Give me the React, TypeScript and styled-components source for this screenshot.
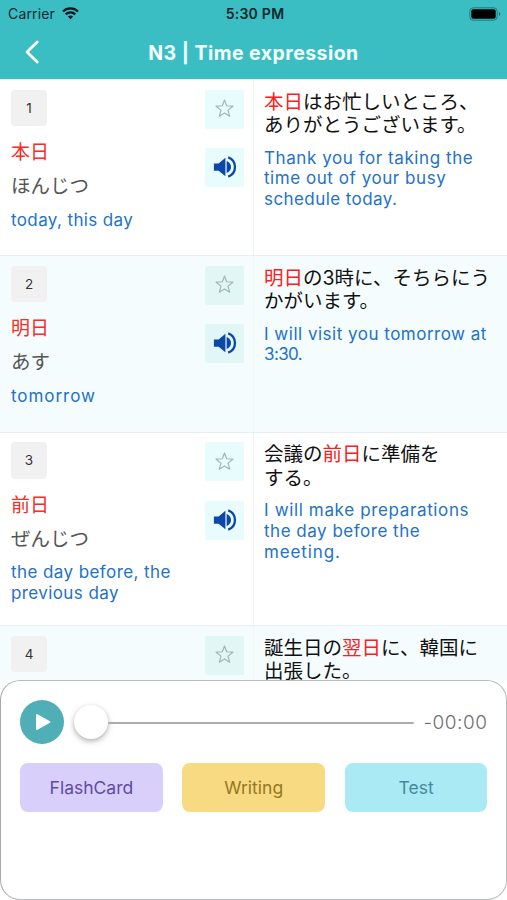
import React from "react";
import styled, { createGlobalStyle } from "styled-components";

const GlobalStyle = createGlobalStyle`
  * { box-sizing: border-box; }
  body {
    margin: 0;
    background: #fff;
    font-family: Inter, "Noto Sans CJK JP", sans-serif;
  }
`;

const Screen = styled.main`
  display: flex;
  flex-direction: column;
  width: 507px;
  height: 900px;
  overflow: hidden;
  background: #fff;
`;

const Header = styled.header`
  flex: none;
  height: 79px;
  background: #3abec4;
`;

const StatusBar = styled.div`
  display: grid;
  grid-template-columns: 1fr auto 1fr;
  align-items: center;
  height: 27px;
  padding: 0 5px 0 8px;
  color: #08282c;
  font-size: 14px;
  line-height: 27px;
`;

const Carrier = styled.span`
  display: flex;
  align-items: center;
  gap: 7px;
  letter-spacing: 0.15px;
`;

const Clock = styled.span`
  font-weight: 600;
  letter-spacing: 0.25px;
`;

const BatteryIcon = styled.svg`
  justify-self: end;
`;

const NavBar = styled.div`
  display: grid;
  grid-template-columns: 64px 1fr 64px;
  align-items: center;
  height: 51px;
`;

const BackButton = styled.button`
  display: flex;
  padding: 0 0 2px 24px;
  border: 0;
  background: none;
`;

const Title = styled.h1`
  margin: 0;
  color: #f4ffff;
  font-size: 19.5px;
  font-weight: 700;
  line-height: 24px;
  letter-spacing: 0.45px;
  text-align: center;
  white-space: nowrap;
`;

const List = styled.section`
  flex: none;
  height: 601px;
  overflow: hidden;
`;

const Row = styled.article<{ $tinted: boolean; $height: number }>`
  display: grid;
  grid-template-columns: 253px 254px;
  height: ${(p) => p.$height}px;
  border-top: 1px solid #e9eeee;
  background: ${(p) => (p.$tinted ? "#f4fcfd" : "#fff")};
`;

const WordCell = styled.div`
  display: flex;
  justify-content: space-between;
  padding: 9.5px 9px 0 11px;
`;

const WordColumn = styled.div`
  display: flex;
  flex-direction: column;
  align-items: flex-start;
`;

const NumberBadge = styled.span`
  display: flex;
  align-items: center;
  justify-content: center;
  width: 36px;
  height: 36.5px;
  margin-bottom: 12px;
  border-radius: 4px;
  background: #f1f1f1;
  color: #333;
  font-size: 13.5px;
`;

const Kanji = styled.div`
  height: 26px;
  margin-bottom: 8px;
  color: #f92c26;
  font-family: "Noto Sans CJK JP", sans-serif;
  font-size: 19px;
  line-height: 26px;
`;

const Kana = styled.div`
  height: 26px;
  margin-bottom: 11.5px;
  color: #555;
  font-family: "Noto Sans CJK JP", sans-serif;
  font-size: 19.5px;
  line-height: 26px;
`;

const English = styled.p`
  margin: 0;
  color: #2272c8;
  font-size: 17px;
  line-height: 20.8px;
  white-space: nowrap;
`;

const Line = styled.span<{ $spacing: number }>`
  display: block;
  letter-spacing: ${(p) => p.$spacing}px;
`;

const Actions = styled.div`
  display: flex;
  flex-direction: column;
  gap: 19.5px;
`;

const IconButton = styled.button<{ $tinted: boolean }>`
  display: flex;
  align-items: center;
  justify-content: center;
  width: 39px;
  height: 39px;
  padding: 0 0 1px;
  border: 0;
  border-radius: 2px;
  background: ${(p) => (p.$tinted ? "#e1f7f6" : "#e8fcfd")};
`;

const SentenceCell = styled.div`
  padding: 8.5px 8px 0 10px;
  border-left: 1px solid #f0f5f5;
`;

const Sentence = styled.p`
  margin: 0 0 12px;
  color: #111;
  font-family: "Noto Sans CJK JP", sans-serif;
  font-size: 19.5px;
  line-height: 23.5px;
  white-space: nowrap;
`;

const Mark = styled.em`
  color: #fa2020;
  font-style: normal;
`;

const Digit = styled.span`
  font-family: Inter, sans-serif;
  line-height: 1;
`;

const Panel = styled.section`
  flex: none;
  height: 220px;
  margin: 0;
  padding: 18px 18.5px 0 19px;
  border: 1px solid #b9bcbc;
  border-left: 1.5px solid #aaa;
  border-radius: 20px;
  background: #fff;
`;

const Player = styled.div`
  display: flex;
  align-items: center;
  height: 46px;
  margin-bottom: 18px;
`;

const PlayButton = styled.button`
  display: flex;
  align-items: center;
  justify-content: center;
  width: 44px;
  height: 44px;
  padding: 0;
  border: 0;
  border-radius: 50%;
  background: #50aeb6;
`;

const Knob = styled.span`
  width: 34px;
  height: 34px;
  margin-left: 9.5px;
  border-radius: 50%;
  background: #fff;
  box-shadow: 0 2px 5px rgba(0, 0, 0, 0.26), 0 3px 10px rgba(0, 0, 0, 0.08);
`;

const Track = styled.span`
  flex: 1;
  height: 2px;
  margin-top: 2px;
  border-radius: 1px;
  background: #acacac;
`;

const Remaining = styled.span`
  width: 64px;
  margin-left: 10px;
  color: #707070;
  font-size: 19px;
  font-weight: 300;
  letter-spacing: 0.5px;
  white-space: nowrap;
`;

const Modes = styled.div`
  display: grid;
  grid-template-columns: repeat(3, 1fr);
  gap: 19.5px;
`;

const ModeButton = styled.button<{ $fill: string; $ink: string }>`
  height: 49px;
  padding: 0;
  border: 0;
  border-radius: 8px;
  background: ${(p) => p.$fill};
  color: ${(p) => p.$ink};
  font: 400 17.5px/49px Inter, sans-serif;
`;

const StarIcon = () => (
  <svg width="19" height="19" viewBox="0 0 18 18" fill="none" stroke="#a3b3b4" strokeWidth="1.1" strokeLinejoin="round">
    <path d="M9 1 11.05 6.4 17 6.8 12.3 10.5 13.9 16.3 9 13.2 4.1 16.3 5.7 10.5 1 6.8 6.95 6.4Z" />
  </svg>
);

const SpeakerIcon = () => (
  <svg width="24" height="24" viewBox="0 0 24 24">
    <path d="M.9 8.4h4.7L12.4 2.8v18.4L5.6 15.8H.9z" fill="#0d47a8" />
    <path d="M13.6 6q4.4 1.8 4.4 6t-4.4 6z" fill="#0d47a8" />
    <path d="M15.2 2.4A10.2 10.2 0 0 1 15.2 21.6" fill="none" stroke="#0d47a8" strokeWidth="2.3" />
  </svg>
);

type TextLine = [text: string, spacing: number];

interface Entry {
  height: number;
  kanji?: string;
  kana?: string;
  meaning: TextLine[];
  sentence: React.ReactNode;
  translation: TextLine[];
}

const entries: Entry[] = [
  {
    height: 176,
    kanji: "本日",
    kana: "ほんじつ",
    meaning: [["today, this day", 0.38]],
    sentence: <><Mark>本日</Mark>はお忙しいところ、<br />ありがとうございます。</>,
    translation: [["Thank you for taking the", 0.57], ["time out of your busy", 0.55], ["schedule today.", 0.42]],
  },
  {
    height: 176.5,
    kanji: "明日",
    kana: "あす",
    meaning: [["tomorrow", 0.95]],
    sentence: <><Mark>明日</Mark>の<Digit>3</Digit>時に、そちらにう<br />かがいます。</>,
    translation: [["I will visit you tomorrow at", 0.5], ["3:30.", -0.6]],
  },
  {
    height: 193.5,
    kanji: "前日",
    kana: "ぜんじつ",
    meaning: [["the day before, the", 0.42], ["previous day", 0.4]],
    sentence: <>会議の<Mark>前日</Mark>に準備を<br />する。</>,
    translation: [["I will make preparations", 0.64], ["the day before the", 0.51], ["meeting.", 0.87]],
  },
  {
    height: 176,
    meaning: [],
    sentence: <>誕生日の<Mark>翌日</Mark>に、韓国に<br />出張した。</>,
    translation: [],
  },
];

const Lines = ({ lines }: { lines: TextLine[] }) => (
  <English>
    {lines.map(([text, spacing]) => (
      <Line key={text} $spacing={spacing}>{text}</Line>
    ))}
  </English>
);

export default function App() {
  return (
    <Screen>
      <GlobalStyle />
      <Header>
        <StatusBar>
          <Carrier>
            Carrier
            <svg width="17" height="13" viewBox="0 0 17 13" fill="none" stroke="#03191c" strokeWidth="2.3">
              <path d="M1 4.5a10.7 10.7 0 0 1 15 0M3.7 7.4a6.9 6.9 0 0 1 9.6 0" />
              <path d="m8.5 12.3-2.6-2.7q2.6-2.1 5.2 0z" fill="#03191c" stroke="none" />
            </svg>
          </Carrier>
          <Clock>5:30 PM</Clock>
          <BatteryIcon width="33" height="14" viewBox="0 0 33 14">
            <rect x=".8" y=".8" width="27.4" height="12.4" rx="3.6" fill="none" stroke="#23777c" />
            <rect x="2.3" y="2.3" width="24.4" height="9.4" rx="2" fill="#000" />
            <path d="M30 5q2.3 2 0 4z" fill="#17686d" />
          </BatteryIcon>
        </StatusBar>
        <NavBar>
          <BackButton aria-label="Back">
            <svg width="16" height="24" viewBox="0 0 16 24" fill="none" stroke="#fff" strokeWidth="2.8" strokeLinecap="round" strokeLinejoin="round">
              <path d="M13.2 2 3 12l10.2 10" />
            </svg>
          </BackButton>
          <Title>N3 | Time expression</Title>
        </NavBar>
      </Header>
      <List>
        {entries.map((entry, index) => {
          const tinted = index % 2 === 1;
          return (
            <Row key={index} $tinted={tinted} $height={entry.height}>
              <WordCell>
                <WordColumn>
                  <NumberBadge>{index + 1}</NumberBadge>
                  {entry.kanji && <Kanji>{entry.kanji}</Kanji>}
                  {entry.kana && <Kana>{entry.kana}</Kana>}
                  <Lines lines={entry.meaning} />
                </WordColumn>
                <Actions>
                  <IconButton $tinted={tinted} aria-label="Favourite"><StarIcon /></IconButton>
                  <IconButton $tinted={tinted} aria-label="Listen"><SpeakerIcon /></IconButton>
                </Actions>
              </WordCell>
              <SentenceCell>
                <Sentence>{entry.sentence}</Sentence>
                <Lines lines={entry.translation} />
              </SentenceCell>
            </Row>
          );
        })}
      </List>
      <Panel>
        <Player>
          <PlayButton aria-label="Play">
            <svg width="18" height="20" viewBox="0 0 18 20">
              <path d="M4 3v14l12.4-7z" fill="#fff" stroke="#fff" strokeWidth="2" strokeLinejoin="round" />
            </svg>
          </PlayButton>
          <Knob />
          <Track />
          <Remaining>-00:00</Remaining>
        </Player>
        <Modes>
          <ModeButton $fill="#d9cffb" $ink="#604aa6">FlashCard</ModeButton>
          <ModeButton $fill="#f8da82" $ink="#947822">Writing</ModeButton>
          <ModeButton $fill="#aaeaf4" $ink="#46899a">Test</ModeButton>
        </Modes>
      </Panel>
    </Screen>
  );
}
